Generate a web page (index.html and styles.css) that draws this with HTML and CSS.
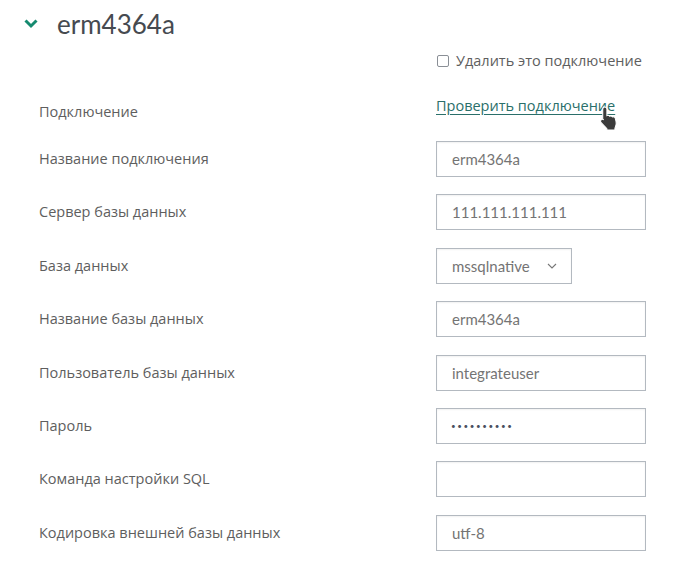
FILE: index.html
```html
<!DOCTYPE html>
<html lang="ru">
<head>
<meta charset="utf-8">
<title>erm4364a</title>
<link rel="stylesheet" href="styles.css">
</head>
<body>
<div class="panel">
  <div class="header">
    <svg class="chevron" width="14" height="10" viewBox="0 0 14 10"><polyline points="1.5,1.5 7,7 12.5,1.5" fill="none" stroke="#158a6f" stroke-width="3"/></svg>
    <span class="title">erm4364a</span>
  </div>
  <div class="delete-row">
    <span class="box"></span>
    <span class="delete-text">Удалить это подключение</span>
  </div>
  <div class="form">
    <div class="row">
      <div class="label label-low">Подключение</div>
      <div class="control link-cell">
        <a class="link" href="#">Проверить подключение</a>
        <svg class="cursor" width="21" height="25" viewBox="0 0 20 24"><path d="M5.5 1C6.6 1 7.5 1.9 7.5 3V9.2C8.4 8.8 9.6 9 10.2 9.8C11.1 9.3 12.4 9.6 12.9 10.5C13.9 10.1 15.2 10.6 15.5 11.7L16.2 14.5C16.5 15.8 16.5 17.2 16.2 18.5L15.2 21.5V23H7.5V21.8L2 16C1.2 15.2 1.2 14 2 13.3C2.8 12.6 3.8 12.7 4.5 13.4L3.5 12.6V3C3.5 1.9 4.4 1 5.5 1Z" fill="#3b3b3b" stroke="#fff" stroke-width="1"/></svg>
      </div>
    </div>
    <div class="row">
      <div class="label">Название подключения</div>
      <div class="control"><div class="input">erm4364a</div></div>
    </div>
    <div class="row">
      <div class="label">Сервер базы данных</div>
      <div class="control"><div class="input">111.111.111.111</div></div>
    </div>
    <div class="row">
      <div class="label">База данных</div>
      <div class="control"><div class="input select"><span>mssqlnative</span><svg width="10" height="6" viewBox="0 0 10 6"><polyline points="1,1 5,5 9,1" fill="none" stroke="#777" stroke-width="1.1"/></svg></div></div>
    </div>
    <div class="row">
      <div class="label">Название базы данных</div>
      <div class="control"><div class="input">erm4364a</div></div>
    </div>
    <div class="row">
      <div class="label">Пользователь базы данных</div>
      <div class="control"><div class="input">integrateuser</div></div>
    </div>
    <div class="row">
      <div class="label">Пароль</div>
      <div class="control"><div class="input dots">••••••••••</div></div>
    </div>
    <div class="row">
      <div class="label">Команда настройки SQL</div>
      <div class="control"><div class="input"></div></div>
    </div>
    <div class="row">
      <div class="label">Кодировка внешней базы данных</div>
      <div class="control"><div class="input">utf-8</div></div>
    </div>
  </div>
</div>
</body>
</html>
```
FILE: styles.css
```css
html, body {
  margin: 0;
  padding: 0;
  background: #fff;
}
body {
  font-family: "Open Sans", "Noto Sans", sans-serif;
  font-size: 14.5px;
  color: #5e5e5e;
}
.panel {
  width: 690px;
}
.header {
  height: 48px;
  display: flex;
  align-items: center;
  padding-left: 24px;
}
.chevron {
  display: block;
  margin-top: -1px;
}
.title {
  margin-left: 19px;
  font-family: "Lato", "Noto Sans", sans-serif;
  font-size: 26px;
  font-weight: 400;
  color: #464a50;
  line-height: 30px;
}
.delete-row {
  margin-top: 3px;
  margin-left: 437px;
  height: 20px;
  display: flex;
  align-items: center;
}
.box {
  width: 10px;
  height: 10px;
  border: 1.5px solid #8a8f96;
  border-radius: 2px;
  margin-right: 7px;
}
.delete-text {
  color: #5e5e5e;
  line-height: 20px;
}
.form {
  margin-top: 16.6px;
  padding-left: 39px;
  display: flex;
  flex-direction: column;
  gap: 17.4px;
}
.row {
  display: grid;
  grid-template-columns: 397px 210px;
  height: 36px;
  align-items: center;
}
.label {
  line-height: 20px;
  font-size: 14.5px;
  color: #5e5e5e;
}
.label-low {
  align-self: end;
  margin-bottom: 2px;
}
.link-cell {
  position: relative;
  align-self: center;
}
.link {
  color: #2a6f6a;
  text-decoration: underline;
  text-underline-offset: 3px;
  line-height: 20px;
  display: inline-block;
}
.cursor {
  position: absolute;
  left: 163px;
  top: 10px;
}
.input {
  box-sizing: border-box;
  height: 36px;
  width: 210px;
  border: 1px solid #b3b9c0;
  box-shadow: inset 0 1px 2px rgba(0,0,0,0.06);
  padding: 0 15px;
  display: flex;
  align-items: center;
  font-family: "Lato", "Noto Sans", sans-serif;
  font-size: 15px;
  color: #747474;
}
.select {
  width: 136px;
  justify-content: space-between;
  padding-right: 14px;
}
.dots {
  font-size: 8px;
  letter-spacing: 1.6px;
  color: #4a5060;
  padding-left: 14px;
}
```
